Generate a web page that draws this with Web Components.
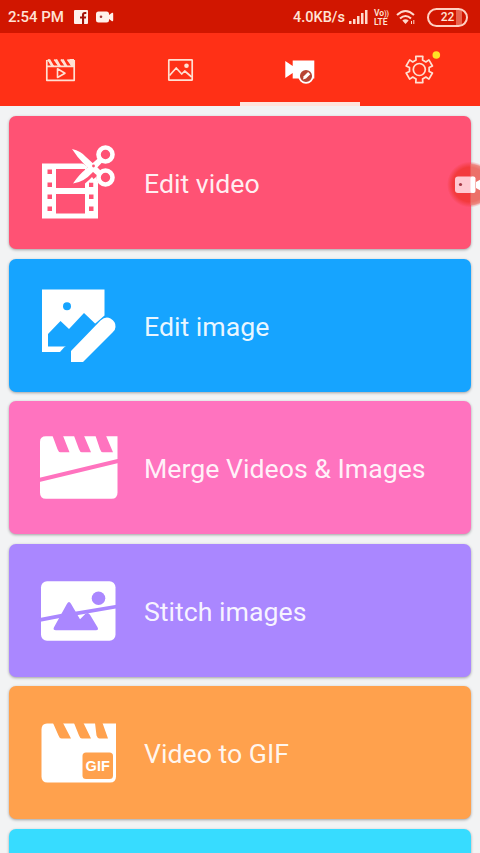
<!DOCTYPE html>
<html lang="en">
<head>
<meta charset="utf-8">
<title>Video editor</title>
<style>
body{margin:0;background:#f2f3f4;font-family:Roboto,"Noto Sans",sans-serif;width:480px;height:853px;overflow:hidden}
</style>
</head>
<body>
<app-screen></app-screen>
<script>
const define=(name,html,setup)=>customElements.define(name,class extends HTMLElement{
  constructor(){
    super();
    const t=document.createElement('template');
    t.innerHTML=html;
    this.attachShadow({mode:'open'}).append(t.content.cloneNode(true));
  }
  connectedCallback(){ if(setup) setup(this); }
});

define('status-bar',`<style>
:host{display:flex;flex:none;height:33px;background:#d11600;color:#ffe3d6;align-items:center;box-sizing:border-box;padding:1px 12px 0 8px;font-weight:500;font-size:15px;white-space:nowrap}
svg{display:block;flex:none}
.fb{margin-left:10px}.cam{margin-left:8px}.sp{flex:1}
.net{font-size:14.5px}
.sig{margin-left:4px}
.lte{font-size:8.5px;line-height:8px;margin-left:6px;width:16px;font-weight:600}
.wifi{margin-left:6px}
.bat{margin-left:11px;width:41px;height:19px;box-sizing:border-box;border:2px solid #ffd0c2;border-radius:10px;font-size:12px;line-height:15px;text-align:center;background:linear-gradient(90deg,transparent 74%,#e8644f 74%,#e8644f 90%,transparent 90%)}
</style>
<span>2:54 PM</span>
<svg class="fb" width="14" height="14" viewBox="0 0 14 14"><rect width="14" height="14" rx="1" fill="#fff0ea"/><path d="M8 14V8.6H6V6.4h2V5c0-2 1-3 2.900-3H12.300v2h-1.200c-.7 0-1 .3-1 1v1.400h2.100l-.3 2.200h-1.800V14z" fill="#a31208"/></svg>
<svg class="cam" width="18" height="12" viewBox="0 0 18 12"><rect x="0" y=".5" width="13" height="11" rx="2.500" fill="#fff0ea"/><path d="M13 4l3-2.200q1.200-.4 1.200 1v6.400q0 1.400-1.200 1L13 8z" fill="#fff0ea"/><circle cx="5" cy="5.800" r="1.300" fill="#a33"/></svg>
<span class="sp"></span>
<span class="net">4.0KB/s</span>
<svg class="sig" width="19" height="14" viewBox="0 0 19 14" fill="#ffd9cc"><path d="M0 11h2.500v3H0zM4 9h2.500v5H4zM8 6h2.500v8H8zM12 3h2.500v11H12zM16 0h2.500v14H16z"/></svg>
<span class="lte">Vo<span style="font-size:7px">))</span><br>LTE</span>
<svg class="wifi" width="20" height="16" viewBox="0 0 20 16" fill="none" stroke="#ffd9cc" stroke-width="2"><path d="M1 6q8.500-8 17 0M4 9.500q5.500-5 11 0"/><path d="M6.300 11.500q3.200-2.500 6.400 0L9.500 15z" fill="#ffd9cc" stroke="none"/><path d="M15.500 12v3M17.800 11v4" stroke-width="1"/></svg>
<span class="bat">22</span>`);

define('tab-item',`<style>
:host{flex:1;display:block;height:73px;box-sizing:border-box;border-bottom:4px solid transparent;color:#ffe0d2}
:host([active]){border-color:#ffe4dd}
::slotted(svg){display:block}
</style><slot></slot>`);

define('tab-bar',`<style>
:host{display:flex;flex:none;height:73px;background:#ff3016}
svg{width:120px;height:69px;fill:none;stroke:#ffe0d2;stroke-width:1.700;stroke-linejoin:round}
</style>
<tab-item><svg viewBox="0 33 120 69"><path d="M46.800 60v20.300h27.400V60M46.800 66.300h27.400M48 59.600l5 6.500M54.300 59.600l5 6.500M61 59.600l5 6.500M67.500 59.600l5 6.500"/><path d="M50 59l4 7h-3l-3.500-6zM57 59l4 7h-3l-3.700-6zM63.500 59l4 7h-3l-3.700-6zM70 59h4v7h-3l-3-6z" fill="#ffe0d2" stroke="none"/><path d="M57.500 68.800v8.700l7.500-4.300z" stroke-width="1.600"/></svg></tab-item>
<tab-item><svg viewBox="120 33 120 69"><rect x="168.800" y="59.800" width="23.400" height="20.400" rx=".5"/><path d="M169.500 75.500l6.700-7.500 5.500 6 3-3 7 6"/><circle cx="186.500" cy="65.800" r="2.300" fill="#ffe0d2" stroke="none"/></svg></tab-item>
<tab-item active><svg viewBox="240 33 120 69"><path d="M285.300 61l7.400 5v-5.400h21.600v18h-21.600v-5.700l-7.400 5.200z" fill="#fff" stroke="none"/><circle cx="306" cy="76" r="6.900" fill="#b74434" stroke="#fff" stroke-width="1.700"/><path d="M303 79.500l.7-3.200 4.400-4.300 2.200 2.200-4.300 4.400z" fill="#fff" stroke="none"/></svg></tab-item>
<tab-item><svg viewBox="360 33 120 69"><path id="gear"/><circle cx="419.300" cy="69.500" r="6"/><circle cx="436.300" cy="55" r="3.800" fill="#ffe126" stroke="none"/></svg></tab-item>`,el=>{
  // Six-toothed gear outline around the tab's centre.
  const cx=419.3,cy=69.5,p=[];
  for(let i=0;i<6;i++){
    for(const [off,r] of [[-19,10],[-15,13.6],[15,13.6],[19,10]]){
      const a=(i*60-90+off)*Math.PI/180;
      p.push((cx+r*Math.cos(a)).toFixed(2)+' '+(cy+r*Math.sin(a)).toFixed(2));
    }
  }
  el.shadowRoot.getElementById('gear').setAttribute('d','M'+p.join('L')+'Z');
});

define('action-card',`<style>
:host{display:flex;align-items:center;height:133px;border-radius:7px;background:var(--tone);color:#ffffffe8;font-size:26.700px;box-shadow:0 1px 3px #0005;white-space:nowrap;flex:none}
::slotted(svg){display:block;flex:none;width:126px;height:133px;margin-right:9px}
.label{padding-top:3px}
</style><slot name="icon"></slot><span class="label"><slot></slot></span>`);

define('record-bubble',`<style>
:host{display:block;position:absolute;left:446px;top:162px;width:34px;height:46px;overflow:hidden}
svg{display:block}
</style>
<svg width="46" height="46" viewBox="0 0 46 46"><defs><radialGradient id="g"><stop offset=".75" stop-color="#f33a3d"/><stop offset="1" stop-color="#f33a3d" stop-opacity="0"/></radialGradient></defs>
<circle cx="24" cy="22.500" r="23" fill="url(#g)"/><path d="M24.500 2a21 21 0 0 1 21 20.500 21 21 0 0 1-21 20.500z" fill="#e98478" opacity=".75"/><rect x="9" y="14.500" width="20" height="16.500" rx="3" fill="#ffc9d1"/><rect x="24.500" y="14.500" width="5" height="16.500" rx="2" fill="#fff"/><path d="M30 20l7-4v14l-7-4z" fill="#fff"/><circle cx="14.500" cy="22.500" r="1.600" fill="#a33844"/></svg>`);

define('app-screen',`<style>
:host{display:flex;flex-direction:column;position:relative;width:480px;height:853px;overflow:hidden;background:#f2f3f4}
main{display:flex;flex:none;flex-direction:column;gap:9.600px;padding:10px 9.500px 0 9px}
svg{fill:#fff}
.k{fill:var(--tone)}
.s{stroke:var(--tone);fill:none}
</style>
<status-bar></status-bar><tab-bar></tab-bar>
<main>
<action-card style="--tone:#ff5274"><svg slot="icon" viewBox="9 116 126 133">
<path d="M42 163.500h56v55H42z"/>
<path class="k" d="M56 169h29v19H56zM56 194h29v19.500H56z"/>
<path class="k" d="M47.500 169.500h4.500v4.500h-4.500zM47.500 182.500h4.500v4.500h-4.500zM47.500 194.500h4.500v4.500h-4.500zM47.500 206.500h4.500v4.500h-4.500zM89 182.500h4.500v4.500H89zM89 194.500h4.500v4.500H89zM89 206.500h4.500v4.500H89z"/>
<path class="k" d="M82 163l6 4-14 17 11 2 11-9 3 8V162z"/>
<path d="M85 183.500l4-3.500 3-3 6 8v8h-4.500v-10.500H89V193h-4z"/>
<path d="M72 149q9 2 14 8l11 10 4 4-4.500 4-12-10.500Q77 157 72 149zM73 183.500q6-9 13-14.500l13-11.500 4 4L92 173q-8 9-19 10.500z"/>
<circle cx="105.500" cy="154.500" r="7" fill="none" stroke="#fff" stroke-width="4.600"/><circle cx="105.500" cy="177.500" r="7" fill="none" stroke="#fff" stroke-width="4.600"/>
<circle class="k" cx="93.500" cy="166" r="1.400"/></svg>Edit video</action-card>
<action-card style="--tone:#16a4ff"><svg slot="icon" viewBox="9 258.600 126 133">
<path d="M42 289h62.500v26L93 325l-29 22-4 4.500H42z"/><path class="k" d="M48 333.500l12.500-13 8.500 8 15-16 9.500 9 4 4L68 352l-1.500-6H48z"/><circle class="k" cx="67" cy="305.800" r="4"/>
<path d="M71 350.500L100.500 320q5-4.500 10-2 5.500 3 5 8.500 0 3-3 5.500L83 361.500H71z"/></svg>Edit image</action-card>
<action-card style="--tone:#ff73bf"><svg slot="icon" viewBox="9 401.200 126 133">
<path d="M46 436.500h71.500V493q0 6-6 6H46q-6 0-6-6V442q0-5.500 6-5.500z"/>
<path class="k" d="M52.500 436h10.500l6.500 16.500H60.500q-2 0-3-3zM74 436h10l7 16.500h-9q-2 0-3-3zM95.500 436H106l7 16.500h-10q-2 0-3-3z"/>
<path class="s" d="M39 480.200L119 461" stroke-width="4"/></svg>Merge Videos &amp; Images</action-card>
<action-card style="--tone:#aa87ff"><svg slot="icon" viewBox="9 543.800 126 133">
<rect x="41" y="581" width="74.500" height="59.500" rx="6"/><circle class="k" cx="98.500" cy="598" r="6.800"/>
<path class="s" d="M40 619.700L75 613M75 613.500l42-7.200" stroke-width="3.800"/><path class="k" d="M54 627l13-23.500q2-3.500 4 0l9 15.500 5.500-5.500q2.500-2 4.500 1L97.500 627q1.500 3-1.500 3H56q-3.500 0-2-3z"/></svg>Stitch images</action-card>
<action-card style="--tone:#ffa14d"><svg slot="icon" viewBox="9 686.400 126 133">
<path d="M47 724h69v53q0 6-6 6H47.500q-6 0-6-6V730q0-6 5.500-6z"/>
<path class="k" d="M53 723.500h10l8 15.500H61.500q-2 0-3-3zM74 723.500h9.500l7.500 15.500h-9q-2 0-3-3zM95 723.500h7.500l5.500 15.500h-8.500q-2 0-3-3z"/>
<rect class="k" x="82.500" y="753" width="30.500" height="26.500" rx="3.500"/><text x="97.700" y="771" text-anchor="middle" font-family="Liberation Sans,sans-serif" font-weight="bold" font-size="14.500" fill="#fff">GIF</text></svg>Video to GIF</action-card>
<action-card style="--tone:#37dcff"></action-card>
</main>
<record-bubble></record-bubble>`);
</script>
</body>
</html>
